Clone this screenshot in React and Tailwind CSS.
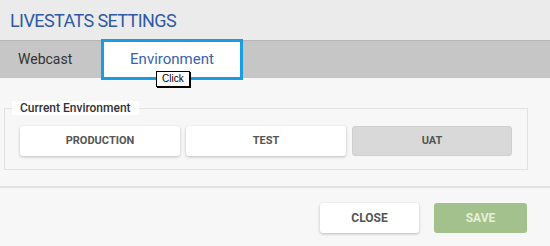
export default function App() {
  const envs = [
    { name: "PRODUCTION", active: false },
    { name: "TEST", active: false },
    { name: "UAT", active: true },
  ];

  return (
    <div className="w-[550px] h-[246px] overflow-hidden bg-[#f7f7f7] font-['Roboto',sans-serif]">
      {/* Header */}
      <div className="h-[40px] bg-[#ebebeb] pl-[10px] flex items-center">
        <h1 className="text-[18px] text-[#2c5aa6] tracking-[-0.6px] leading-none pt-[1px]">
          LIVESTATS SETTINGS
        </h1>
      </div>

      {/* Tabs */}
      <div className="h-[38px] bg-[#c6c6c6] border-t border-[#b5b5b5] flex items-stretch">
        <div className="w-[101px] pl-[18px] flex items-center text-[14px] text-[#333]">Webcast</div>
        <div className="relative -mt-[2px] h-[41px] w-[142px] bg-white border-[3px] border-[#1a9de0] flex items-center justify-center text-[15px] text-[#3a63ad]">
          Environment
          <div className="absolute left-[52px] top-[29px] h-[16px] px-[5px] bg-white border border-black shadow-[1px_1px_0_#000] text-[10px] leading-[14px] text-black font-['Liberation_Sans',sans-serif]">
            Click
          </div>
        </div>
      </div>

      {/* Content */}
      <div className="h-[108px] pt-[23px]">
        <fieldset className="ml-[4px] w-[524px] h-[69px] border border-[#e2e2e2] px-[15px]">
          <legend className="-ml-[8px] px-[8px] bg-white text-[12px] font-medium text-[#333] leading-[14px]">
            Current Environment
          </legend>
          <div className="flex gap-[6px] mt-[11px]">
            {envs.map((e) => (
              <button
                key={e.name}
                className={
                  e.active
                    ? "w-[160px] h-[30px] rounded-[3px] bg-[#d9d9d9] border border-[#cfcfcf] text-[11px] font-bold text-[#555]"
                    : "w-[160px] h-[30px] rounded-[3px] bg-white shadow-[0_1px_3px_rgba(0,0,0,0.25)] text-[11px] font-bold text-[#555]"
                }
              >
                {e.name}
              </button>
            ))}
          </div>
        </fieldset>
      </div>

      {/* Footer */}
      <div className="border-t-2 border-[#e2e2e2] flex justify-end gap-[15px] pr-[23px] pt-[15px]">
        <button className="w-[99px] h-[30px] rounded-[3px] bg-white shadow-[0_1px_3px_rgba(0,0,0,0.25)] text-[12px] font-bold text-[#555]">
          CLOSE
        </button>
        <button className="w-[93px] h-[30px] rounded-[3px] bg-[#a3c18c] text-[12px] font-bold text-[#e6efdc]">
          SAVE
        </button>
      </div>
    </div>
  );
}
